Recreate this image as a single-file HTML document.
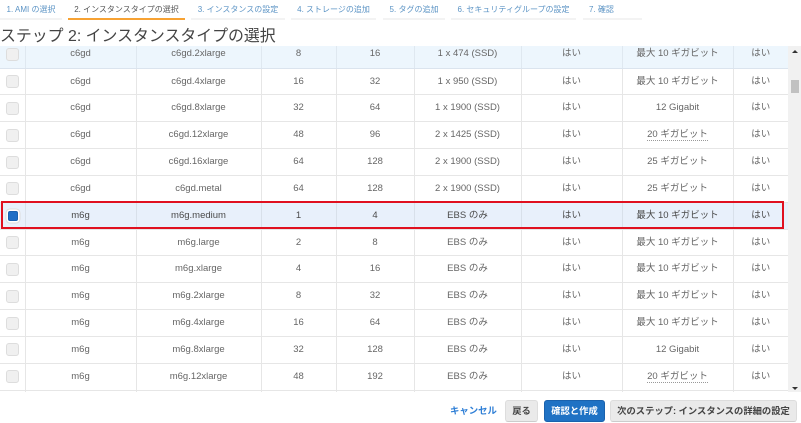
<!DOCTYPE html>
<html lang="ja"><head><meta charset="utf-8">
<style>
html,body{margin:0;padding:0;width:801px;height:423px;overflow:hidden;background:#fff}
body{position:relative;font-family:"Liberation Sans","Noto Sans CJK JP",sans-serif;color:#555}
.tab{position:absolute;top:0;height:18px;border-bottom:2px solid #f3f3f3;font-size:8px;line-height:20px;color:#5c94c5;text-align:center;white-space:nowrap}
.tab.on{color:#555;border-bottom:2px solid #f7a233}
h1{position:absolute;left:0;top:25px;margin:0;font-size:15.9px;font-weight:normal;line-height:24px;color:#444;white-space:nowrap}
#clip{position:absolute;left:0;top:46px;width:788px;height:346px;overflow:hidden}
table{position:absolute;left:0;top:-4.7px;width:788px;border-collapse:collapse;table-layout:fixed;font-size:9.5px;line-height:12px;color:#666}
td{height:25.83px;padding:0;border:1px solid #e6e6e6;border-top:0;text-align:center;white-space:nowrap;border-left:0}
td:last-child{border-right:0}
tr{height:26.83px}
tr.h td{background:#edf6fd;border-bottom-color:#dbe4ee;border-right-color:#dfe8f0}
tr.s td{background:#e8f0fb;color:#4a4a4a;border-right-color:#d8e0ea}
.c{display:block;width:11px;height:11px;margin:0 auto 0 6px;border:1px solid #ddd;border-radius:3px;background:#f0f0f0}
.s .c{background:#1f6fc6;border:1px solid #1a62b0;box-shadow:0 0 0 1.5px #fff,0 0 0 2.5px #ddd;width:8px;height:8px;margin-left:8px;border-radius:2px}
.d{display:inline-block;line-height:10px;border-bottom:1px dotted #999}
#red{position:absolute;left:1px;top:201px;width:779px;height:24px;border:2px solid #e0101f}
#sb{position:absolute;left:788px;top:46px;width:13px;height:346px;background:#f1f1f1}
#th{position:absolute;left:791px;top:80px;width:8px;height:13px;background:#c1c1c1}
.ar{position:absolute;left:792px;width:0;height:0;border-left:3px solid transparent;border-right:3px solid transparent}
.btn{position:absolute;top:400px;height:20px;line-height:20px;border:1px solid #ddd;border-bottom-color:#ccc;border-radius:3px;background:#eaeaea;font-size:9.3px;font-weight:bold;color:#444;text-align:center;white-space:nowrap}
</style></head><body>
<div class="tab" style="left:0;width:62px">1. AMI の選択</div>
<div class="tab on" style="left:68px;width:117px">2. インスタンスタイプの選択</div>
<div class="tab" style="left:191px;width:94px">3. インスタンスの設定</div>
<div class="tab" style="left:291px;width:85px">4. ストレージの追加</div>
<div class="tab" style="left:383px;width:62px">5. タグの追加</div>
<div class="tab" style="left:451px;width:125px">6. セキュリティグループの設定</div>
<div class="tab" style="left:583px;width:59px;text-align:left;text-indent:6px">7. 確認</div>
<h1>ステップ 2: インスタンスタイプの選択</h1>
<div id="clip">
<table>
<colgroup><col style="width:25px"><col style="width:111px"><col style="width:125px"><col style="width:75px"><col style="width:78px"><col style="width:107px"><col style="width:101px"><col style="width:111px"><col style="width:55px"></colgroup>
<tr class="h"><td><span class="c"></span></td><td>c6gd</td><td>c6gd.2xlarge</td><td>8</td><td>16</td><td>1 x 474 (SSD)</td><td>はい</td><td>最大 10 ギガビット</td><td>はい</td></tr>
<tr><td><span class="c"></span></td><td>c6gd</td><td>c6gd.4xlarge</td><td>16</td><td>32</td><td>1 x 950 (SSD)</td><td>はい</td><td>最大 10 ギガビット</td><td>はい</td></tr>
<tr><td><span class="c"></span></td><td>c6gd</td><td>c6gd.8xlarge</td><td>32</td><td>64</td><td>1 x 1900 (SSD)</td><td>はい</td><td>12 Gigabit</td><td>はい</td></tr>
<tr><td><span class="c"></span></td><td>c6gd</td><td>c6gd.12xlarge</td><td>48</td><td>96</td><td>2 x 1425 (SSD)</td><td>はい</td><td><span class="d">20 ギガビット</span></td><td>はい</td></tr>
<tr><td><span class="c"></span></td><td>c6gd</td><td>c6gd.16xlarge</td><td>64</td><td>128</td><td>2 x 1900 (SSD)</td><td>はい</td><td>25 ギガビット</td><td>はい</td></tr>
<tr><td><span class="c"></span></td><td>c6gd</td><td>c6gd.metal</td><td>64</td><td>128</td><td>2 x 1900 (SSD)</td><td>はい</td><td>25 ギガビット</td><td>はい</td></tr>
<tr class="s"><td><span class="c"></span></td><td>m6g</td><td>m6g.medium</td><td>1</td><td>4</td><td>EBS のみ</td><td>はい</td><td>最大 10 ギガビット</td><td>はい</td></tr>
<tr><td><span class="c"></span></td><td>m6g</td><td>m6g.large</td><td>2</td><td>8</td><td>EBS のみ</td><td>はい</td><td>最大 10 ギガビット</td><td>はい</td></tr>
<tr><td><span class="c"></span></td><td>m6g</td><td>m6g.xlarge</td><td>4</td><td>16</td><td>EBS のみ</td><td>はい</td><td>最大 10 ギガビット</td><td>はい</td></tr>
<tr><td><span class="c"></span></td><td>m6g</td><td>m6g.2xlarge</td><td>8</td><td>32</td><td>EBS のみ</td><td>はい</td><td>最大 10 ギガビット</td><td>はい</td></tr>
<tr><td><span class="c"></span></td><td>m6g</td><td>m6g.4xlarge</td><td>16</td><td>64</td><td>EBS のみ</td><td>はい</td><td>最大 10 ギガビット</td><td>はい</td></tr>
<tr><td><span class="c"></span></td><td>m6g</td><td>m6g.8xlarge</td><td>32</td><td>128</td><td>EBS のみ</td><td>はい</td><td>12 Gigabit</td><td>はい</td></tr>
<tr><td><span class="c"></span></td><td>m6g</td><td>m6g.12xlarge</td><td>48</td><td>192</td><td>EBS のみ</td><td>はい</td><td><span class="d">20 ギガビット</span></td><td>はい</td></tr>
<tr><td></td><td></td><td></td><td></td><td></td><td></td><td></td><td></td><td></td></tr>
</table>
</div>
<div id="red"></div>
<div id="sb"></div><div id="th"></div>
<div class="ar" style="top:50px;border-bottom:3px solid #333"></div>
<div class="ar" style="top:387px;border-top:3px solid #333"></div>
<div style="position:absolute;left:450px;top:405px;font-size:9.4px;line-height:12px;font-weight:bold;color:#2f7fd6;white-space:nowrap">キャンセル</div>
<div class="btn" style="left:505px;width:31px">戻る</div>
<div class="btn" style="left:544px;width:59px;background:#1f72c4;border-color:#1a62ad;color:#fff">確認と作成</div>
<div class="btn" style="left:610px;width:185px">次のステップ: インスタンスの詳細の設定</div>
</body></html>
